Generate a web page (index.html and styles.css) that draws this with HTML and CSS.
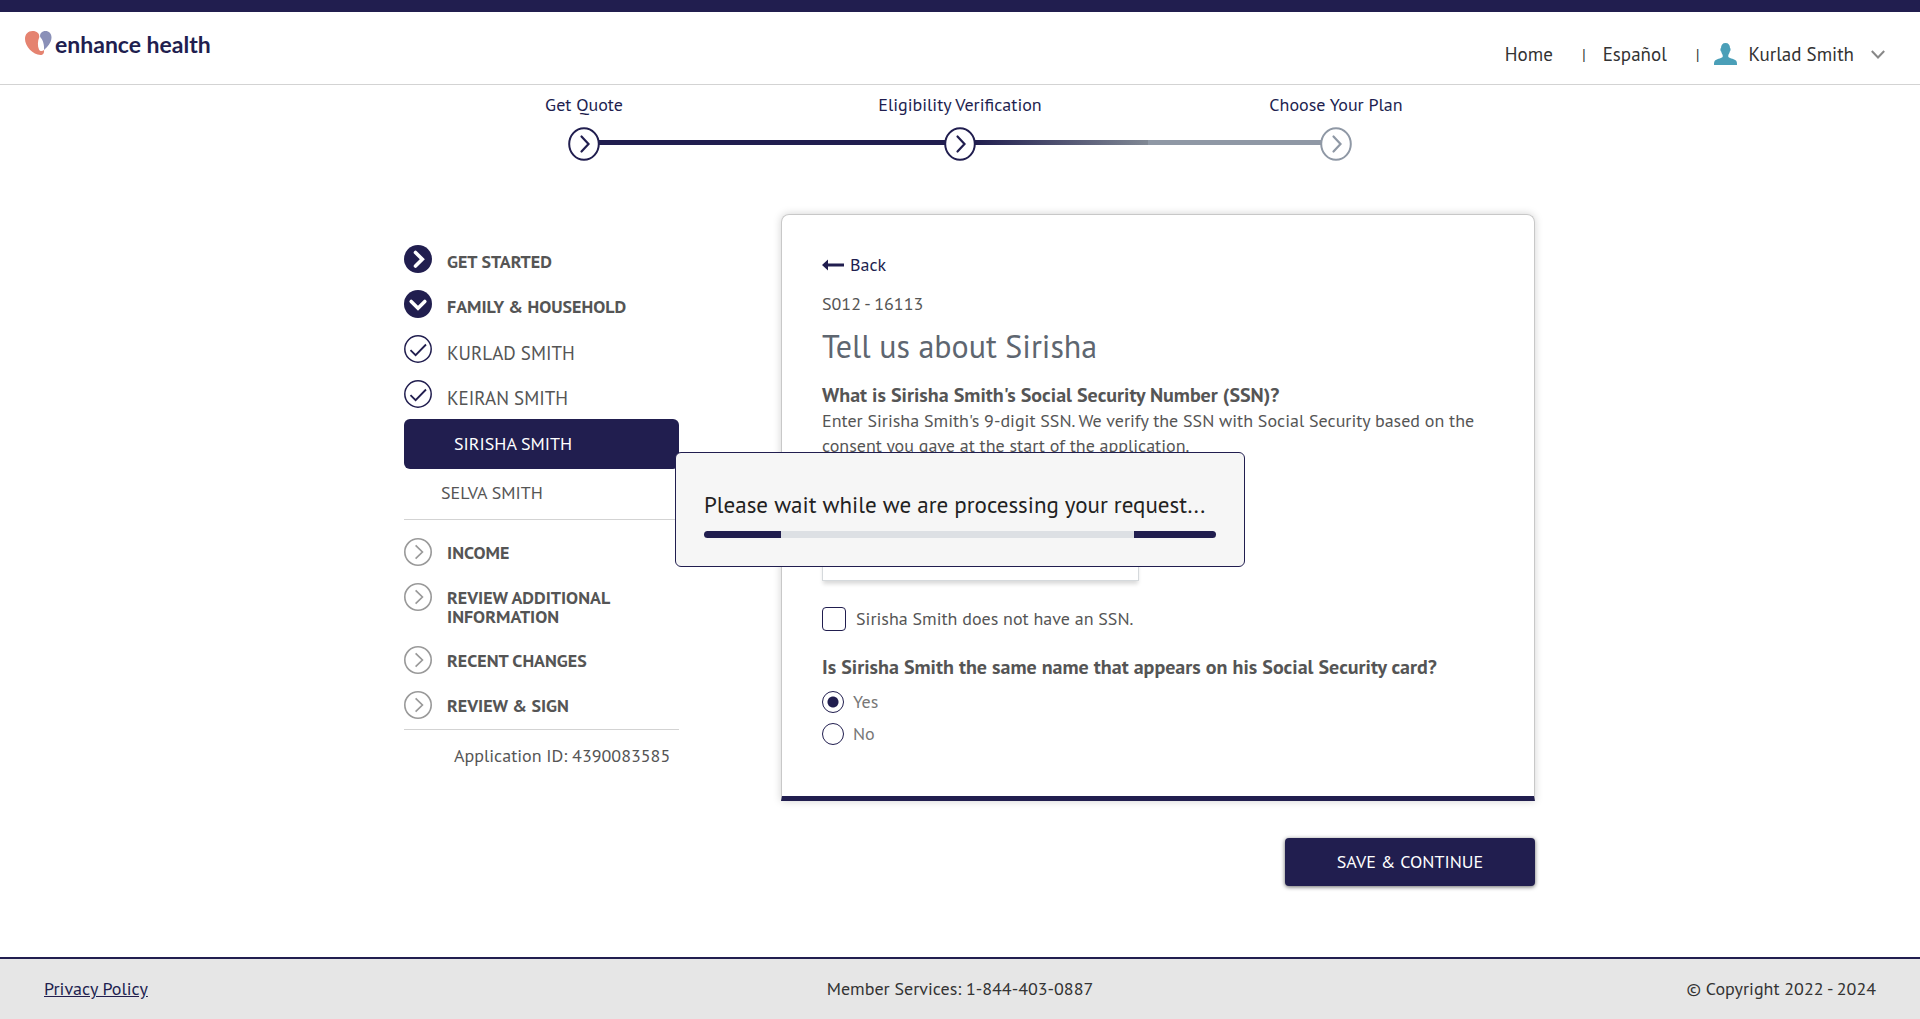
FILE: index.html
```html
<!DOCTYPE html>
<html lang="en">
<head>
<meta charset="utf-8">
<meta name="viewport" content="width=device-width, initial-scale=1">
<title>Enhance Health</title>
<link rel="stylesheet" href="styles.css">
</head>
<body>
<svg class="sprite" aria-hidden="true">
  <symbol id="ring-right" viewBox="0 0 28 28">
    <circle cx="14" cy="14" r="13.2" fill="none" stroke="currentColor" stroke-width="1.6"/>
    <path d="M11.6 7.4 18.4 14l-6.8 6.6" fill="none" stroke="currentColor" stroke-width="1.7"/>
  </symbol>
  <symbol id="ring-check" viewBox="0 0 28 28">
    <circle cx="14" cy="14" r="13.2" fill="none" stroke="currentColor" stroke-width="1.5"/>
    <path d="M6.500 15.200 11.600 20.200 22 9.500" fill="none" stroke="currentColor" stroke-width="1.8"/>
  </symbol>
  <symbol id="disc-right" viewBox="0 0 28 28">
    <circle cx="14" cy="14" r="14" fill="currentColor"/>
    <path d="M11.500 7.500 18.300 14.200l-6.800 6.800" fill="none" stroke="#fff" stroke-width="3.600" stroke-linecap="round"/>
  </symbol>
  <symbol id="disc-down" viewBox="0 0 28 28">
    <circle cx="14" cy="14" r="14" fill="currentColor"/>
    <path d="M7.200 11.500 14 18.200l6.800-6.700" fill="none" stroke="#fff" stroke-width="3.600" stroke-linecap="round"/>
  </symbol>
  <symbol id="step" viewBox="0 0 32 34">
    <ellipse cx="16" cy="17" rx="14.800" ry="15.800" fill="#fff" stroke="currentColor" stroke-width="2"/>
    <path d="M13.500 9.500l7 7.500-7 7.500" fill="none" stroke="currentColor" stroke-width="2.200" stroke-linecap="round"/>
  </symbol>
</svg>

<header class="site-header">
  <a class="logo" href="#">
    <svg class="logo-mark" viewBox="0 0 27 24" aria-hidden="true">
      <path d="M0 8C0 3 3 0 7.500 0 12 0 14.500 2.500 14.300 6 12.500 10 12.500 15 14 18.500 15 20.500 17.500 20.500 19 19 19.500 22 18 24 15.500 24 8 24 0 15 0 8Z" fill="#e58370"/>
      <path d="M15.200 6C14.500 2.500 17 0 20.500 0 24 0 26.500 2.500 26.500 6.500 26.500 11.500 22.500 16 19 19 19.500 14 18 9 15.200 6Z" fill="#8a90b8"/>
    </svg>
    <span>enhance health</span>
  </a>
  <nav class="top-nav">
    <a href="#">Home</a>
    <span class="bar">|</span>
    <a href="#">Español</a>
    <span class="bar">|</span>
    <button class="user" type="button">
      <svg class="user-icon" viewBox="0 0 23 22" aria-hidden="true"><path d="M7 5C7 2 8.500 0 11.500 0S16 2 16 5C16.800 5 16.800 8 15.800 8.500 15.500 10.500 14.500 11.500 14.300 12.200V14C16 15.500 21 16 22.200 17.800 23 19 23 20.500 23 22H0C0 20.500 0 19 .8 17.800 2 16 7 15.500 8.700 14V12.200C8.500 11.500 7.500 10.500 7.200 8.500 6.200 8 6.200 5 7 5Z" fill="#4a9fb8"/></svg>
      <span>Kurlad Smith</span>
      <svg class="caret" viewBox="0 0 14 9" aria-hidden="true"><path d="M.8 1 7 7.500 13.200 1" fill="none" stroke="#888" stroke-width="2"/></svg>
    </button>
  </nav>
</header>

<main>
  <ol class="stepper">
    <li class="done"><span>Get Quote</span><div class="track"><svg><use href="#step"/></svg></div></li>
    <li class="current"><span>Eligibility Verification</span><div class="track"><svg><use href="#step"/></svg></div></li>
    <li class="todo"><span>Choose Your Plan</span><div class="track"><svg><use href="#step"/></svg></div></li>
  </ol>

  <div class="content">
    <aside>
      <ul class="sections top">
        <li><svg><use href="#disc-right"/></svg><a href="#">GET STARTED</a></li>
        <li><svg><use href="#disc-down"/></svg><a href="#">FAMILY &amp; HOUSEHOLD</a></li>
        <li class="member"><svg><use href="#ring-check"/></svg><a href="#">KURLAD SMITH</a></li>
        <li class="member"><svg><use href="#ring-check"/></svg><a href="#">KEIRAN SMITH</a></li>
      </ul>
      <a class="selected" href="#">SIRISHA SMITH</a>
      <a class="next" href="#">SELVA SMITH</a>
      <ul class="sections pending">
        <li><svg><use href="#ring-right"/></svg><a href="#">INCOME</a></li>
        <li><svg><use href="#ring-right"/></svg><a href="#">REVIEW ADDITIONAL INFORMATION</a></li>
        <li><svg><use href="#ring-right"/></svg><a href="#">RECENT CHANGES</a></li>
        <li><svg><use href="#ring-right"/></svg><a href="#">REVIEW &amp; SIGN</a></li>
      </ul>
      <p class="app-id">Application ID: 4390083585</p>
    </aside>

    <form>
      <div class="card">
        <a class="back" href="#"><svg viewBox="0 0 22 12" aria-hidden="true"><path d="M0 6 6 .5V4.600H22V7.400H6V11.500Z" fill="currentColor"/></svg>Back</a>
        <p class="code">S012 - 16113</p>
        <h1>Tell us about Sirisha</h1>
        <label class="question" for="ssn">What is Sirisha Smith's Social Security Number (SSN)?</label>
        <p class="help">Enter Sirisha Smith's 9-digit SSN. We verify the SSN with Social Security based on the consent you gave at the start of the application.</p>
        <input class="ssn" id="ssn" type="text">
        <label class="choice check"><input type="checkbox"><span>Sirisha Smith does not have an SSN.</span></label>
        <fieldset>
          <legend class="question">Is Sirisha Smith the same name that appears on his Social Security card?</legend>
          <label class="choice"><input type="radio" name="same" checked><span>Yes</span></label>
          <label class="choice"><input type="radio" name="same"><span>No</span></label>
        </fieldset>
      </div>
      <button class="save" type="button">SAVE &amp; CONTINUE</button>
    </form>
  </div>
</main>

<footer>
  <a href="#">Privacy Policy</a>
  <span>Member Services: 1-844-403-0887</span>
  <span>© Copyright 2022 - 2024</span>
</footer>

<div class="overlay">
  <div class="dialog" role="status">
    <p>Please wait while we are processing your request...</p>
    <div class="progress"></div>
  </div>
</div>
</body>
</html>
```
FILE: styles.css
```css
:root {
  --navy: #211e4f;
  --text: #555;
  --line: #d3d3d3;
}

* { box-sizing: border-box; }

body {
  margin: 0;
  min-height: 100vh;
  display: flex;
  flex-direction: column;
  background: #fff;
  color: var(--text);
  font: 18px/24px "PT Sans", "Noto Sans", sans-serif;
}

a { color: inherit; text-decoration: none; }
p, h1, ul, ol { margin: 0; padding: 0; list-style: none; }
button, input { font: inherit; }
svg { display: block; flex: none; }
.sprite { position: absolute; width: 0; height: 0; }

/* Header */
.site-header {
  display: flex;
  justify-content: space-between;
  align-items: flex-start;
  height: 85px;
  padding: 18px 35px 0 25px;
  border-top: 12px solid var(--navy);
  border-bottom: 1px solid var(--line);
}
.logo {
  display: flex;
  gap: 3px;
  color: var(--navy);
  font: bold 23px/28px Lato, sans-serif;
}
.logo-mark { width: 27px; height: 24px; margin-top: 1px; }
.top-nav {
  display: flex;
  align-items: center;
  margin-top: 12px;
  color: #333;
  font-size: 19px;
}
.bar { margin: 0 17px 0 29px; font-size: 16px; color: #333; }
.bar + .user { margin-left: -3px; }
.user {
  display: flex;
  align-items: center;
  padding: 0;
  border: 0;
  background: none;
  color: inherit;
}
.user-icon { width: 23px; height: 22px; margin-right: 12px; }
.caret { width: 14px; height: 9px; margin-left: 17px; }

main { flex: 1; }

/* Progress steps */
.stepper {
  display: grid;
  grid-template-columns: repeat(3, 1fr);
  width: min(1128px, 100%);
  margin: 0 auto;
  padding-top: 8px;
  color: var(--navy);
  text-align: center;
}
.track {
  display: flex;
  justify-content: center;
  margin-top: 10px;
  background: linear-gradient(var(--navy), var(--navy)) 0 13px / 100% 5px no-repeat;
}
.track svg { width: 32px; height: 34px; }
.done .track { background-position: 100% 13px; background-size: 50% 5px; }
.current .track { background-image: linear-gradient(90deg, var(--navy) 54%, #808894); }
.todo .track {
  background-image: linear-gradient(#8f98a5, #8f98a5);
  background-size: 50% 5px;
  color: #8f98a5;
}

/* Two-column content */
.content {
  display: grid;
  grid-template-columns: 275px minmax(0, 754px);
  justify-content: center;
  gap: 102px;
  margin: 53px 0 71px;
  padding-left: 19px;
}

/* Section list */
aside { padding-top: 31px; }
.sections li { display: flex; gap: 15px; margin-bottom: 17px; }
.sections svg { width: 28px; height: 28px; color: var(--navy); }
.sections a { padding-top: 7px; font-weight: 600; line-height: 19px; }
.sections .member a { padding-top: 9px; font-size: 19px; font-weight: 400; }
.sections.top li:last-child { margin-bottom: 11px; }
.selected {
  display: block;
  padding: 13px 50px;
  border-radius: 6px;
  background: var(--navy);
  color: #fff;
}
.next {
  display: block;
  padding: 12px 37px 14px;
  border-bottom: 1px solid var(--line);
}
.pending { padding-top: 18px; border-bottom: 1px solid var(--line); }
.pending svg { color: #999; }
.sections.pending a { padding: 5px 0 3px; }
.sections.pending li:last-child { margin-bottom: 10px; }
.app-id { padding: 14px 0 0 50px; white-space: nowrap; }

/* Form card */
form { display: flex; flex-direction: column; align-items: flex-start; }
.card {
  width: 100%;
  padding: 38px 36px 50px 40px;
  border: 1px solid #c8c8c8;
  border-bottom: 5px solid var(--navy);
  border-radius: 8px 8px 0 0;
  box-shadow: 0 0 8px rgba(0, 0, 0, .18);
}
.back { display: flex; align-items: center; gap: 6px; color: var(--navy); }
.back svg { width: 22px; height: 12px; }
.code { margin-top: 15px; }
h1 {
  margin-top: 8px;
  color: #5e6670;
  font-size: 32px;
  font-weight: 400;
  line-height: 44px;
}
.question {
  display: block;
  padding: 0;
  font-size: 20px;
  font-weight: 600;
  line-height: 26px;
}
h1 + .question { margin-top: 14px; }
.help { line-height: 25px; }
.ssn {
  display: block;
  width: 317px;
  height: 48px;
  margin-top: 75px;
  padding: 0 12px;
  border: 1px solid #d5d9dc;
  box-shadow: 0 4px 4px -1px rgba(0, 0, 0, .15);
}
.choice { display: flex; align-items: center; gap: 9px; color: #777; }
.choice input {
  appearance: none;
  width: 22px;
  height: 22px;
  margin: 0;
  border: 1px solid var(--navy);
  border-radius: 50%;
  background: #fff;
}
.choice input:checked { background: radial-gradient(circle, var(--navy) 5px, #fff 6px); }
.check { gap: 10px; margin: 26px 0 23px; color: var(--text); }
.check input { width: 24px; height: 24px; border-radius: 4px; }
fieldset { margin: 0; padding: 0; border: 0; }
fieldset .question { padding-bottom: 2px; }
fieldset .choice { margin-top: 8px; }
.save {
  width: 250px;
  height: 48px;
  margin-top: 37px;
  align-self: flex-end;
  border: 0;
  border-radius: 4px;
  background: var(--navy);
  box-shadow: 0 1px 4px rgba(0, 0, 0, .6);
  color: #fff;
}

footer {
  display: grid;
  grid-template-columns: 1fr auto 1fr;
  align-items: center;
  padding: 18px 44px;
  border-top: 2px solid var(--navy);
  background: #e6e6e6;
  color: #333;
}
footer a { justify-self: start; color: var(--navy); text-decoration: underline; }
footer span:last-child { justify-self: end; }

/* Busy message */
.overlay {
  position: fixed;
  inset: 0;
  display: flex;
  align-items: center;
  justify-content: center;
}
.dialog {
  width: 570px;
  padding: 38px 28px 28px;
  border: 1px solid var(--navy);
  border-radius: 6px;
  background: #f6f6f6;
  color: #222;
  font-size: 23px;
  line-height: 28px;
  white-space: nowrap;
}
.progress {
  height: 7px;
  margin-top: 12px;
  border-radius: 4px;
  background: linear-gradient(90deg, var(--navy) 15%, #dde0e4 15% 84%, var(--navy) 84%);
}
```
